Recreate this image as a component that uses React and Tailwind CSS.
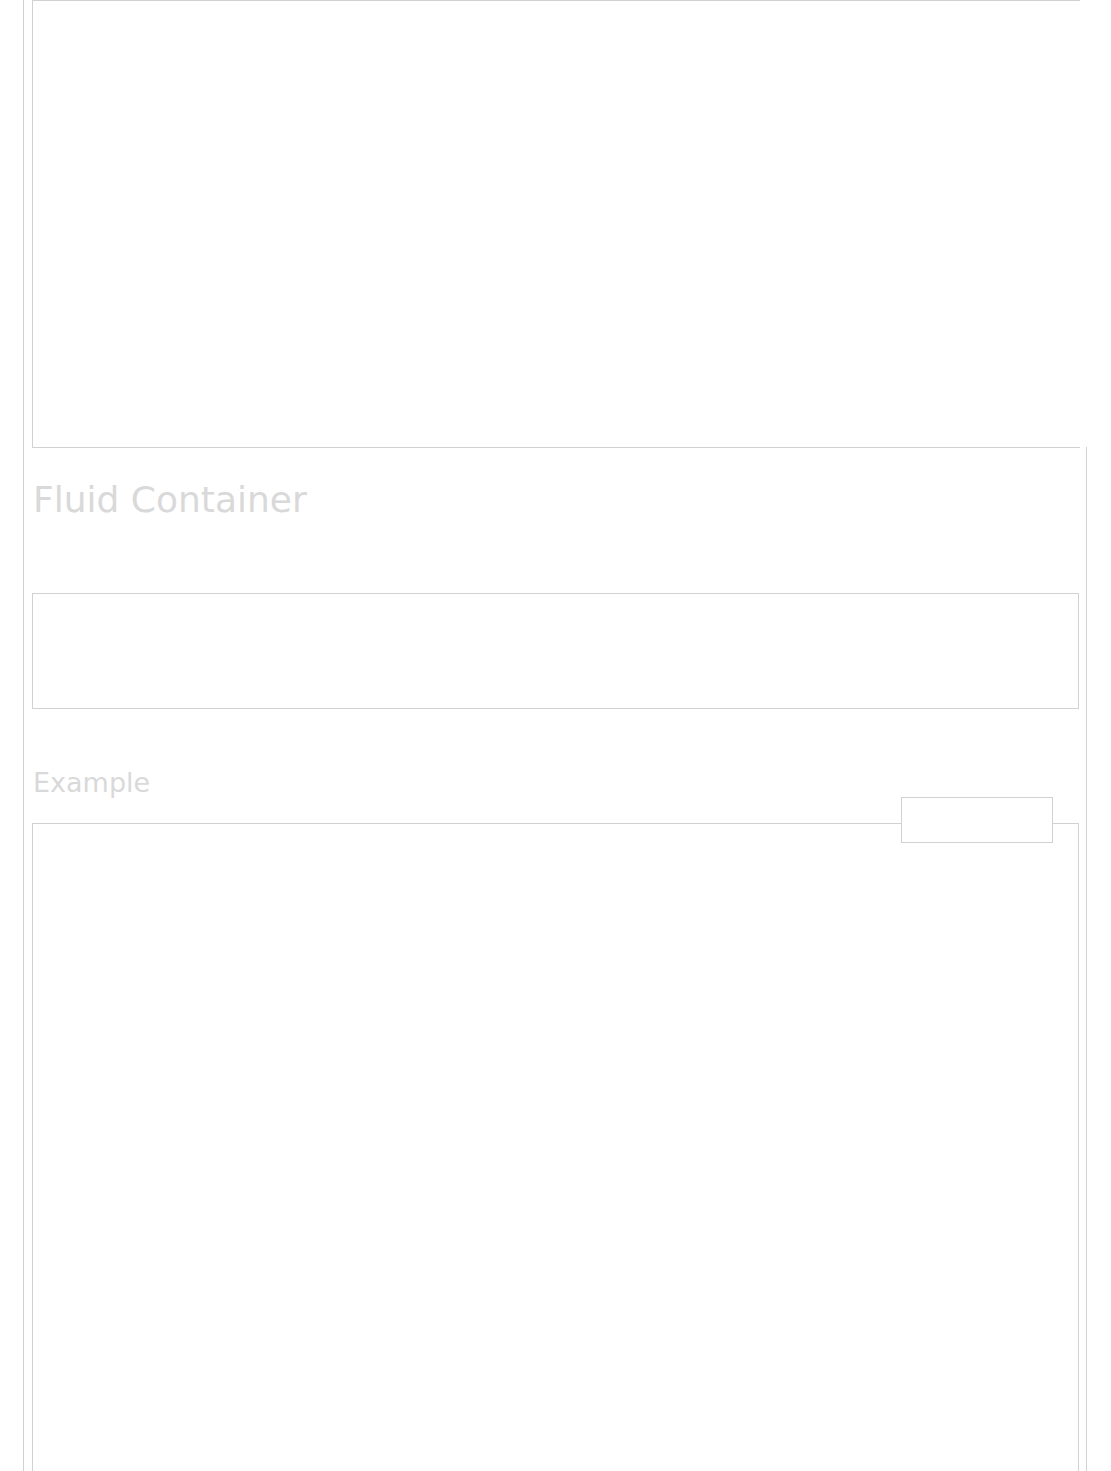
import React from 'react';

const App = () => {
  return (
    <div className="min-h-[1471px] bg-white overflow-hidden" style={{ fontFamily: '"DejaVu Sans", Verdana, sans-serif' }}>
      <div className="ml-[23px] w-[1064px] min-h-[1471px] border-l border-[#d2d2d2]">
        {/* Top preview frame */}
        <div className="ml-[8px] w-[1048px] h-[448px] border-t border-l border-b border-[#d2d2d2] bg-white" />

        {/* Lower section */}
        <div className="flow-root -mt-px min-h-[1024px] border-r border-[#d2d2d2] pl-[8px] pr-[7px]">
          <h2 className="mt-[35px] pl-px text-[36px] leading-[36px] font-normal text-[#d9d9d9]">Fluid Container</h2>

          <div className="mt-[75px] h-[116px] border border-[#d2d2d2] bg-white" />

          <h3 className="mt-[60px] pl-px text-[27px] leading-[27px] font-normal text-[#d9d9d9]">Example</h3>

          <div className="relative mt-[27px] h-[700px] border border-[#d2d2d2] bg-white">
            <div className="absolute top-[-27px] left-[868px] w-[152px] h-[46px] border border-[#d2d2d2] bg-white" />
          </div>
        </div>
      </div>
    </div>
  );
};

export default App;
